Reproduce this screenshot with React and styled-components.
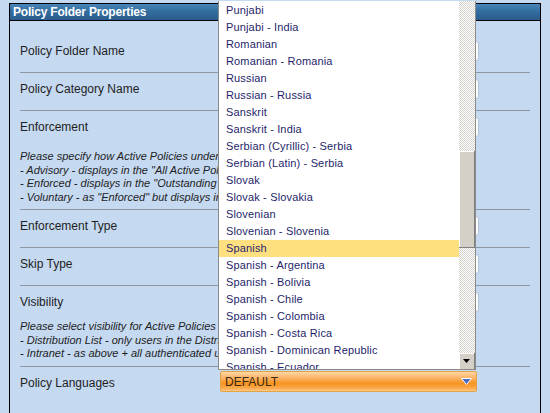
import React from "react";
import styled, { createGlobalStyle } from "styled-components";

const GlobalStyle = createGlobalStyle`
  html, body {
    margin: 0;
    padding: 0;
    background: #c5d9f1;
    overflow: hidden;
  }
  body {
    font-family: "Liberation Sans", Arial, sans-serif;
    font-size: 12px;
    color: #1b1b1b;
  }
`;

const Page = styled.div`
  width: 550px;
  height: 413px;
  padding: 3px 0 0 9px;
  box-sizing: border-box;
`;

const Panel = styled.section`
  width: 532px;
  height: 420px;
  box-sizing: border-box;
  border: 1px solid #000;
  border-bottom: none;
`;

const TitleBar = styled.header`
  height: 16px;
  padding-left: 3px;
  display: flex;
  align-items: center;
  background: linear-gradient(#4a86bb 0%, #336d9f 45%, #285c8c 100%);
  border-bottom: 1px solid #000;
  color: #fff;
  font-weight: bold;
  font-size: 12px;
  letter-spacing: -0.2px;
`;

const Form = styled.div`
  padding: 14px 10px 0 10px;
  display: flex;
  flex-direction: column;
`;

const Row = styled.div`
  display: flex;
  flex-direction: column;
  padding: 6px 0 5px 0;
  border-bottom: ${(p) => (p.last ? "none" : "1px solid #8e979f")};
`;

const Field = styled.div`
  display: grid;
  grid-template-columns: 200px 259px;
  align-items: center;
  height: 20px;
  margin-bottom: 6px;
  position: relative;
`;

const Label = styled.span`
  font-size: 12px;
  color: #1e1e1e;
`;

const Input = styled.div`
  height: 20px;
  box-sizing: border-box;
  background: #fff;
  border: 1px solid #b3c2d6;
  border-radius: 3px;
`;

const Help = styled.div`
  margin-top: ${(p) => p.gap}px;
  font-style: italic;
  font-size: 11px;
  line-height: 13.5px;
  color: #1e1e1e;
  white-space: nowrap;
`;

const Select = styled.div`
  width: 257px;
  height: 21px;
  margin-top: -2px;
  box-sizing: border-box;
  border: 1px solid #e3a447;
  border-radius: 2px;
  background: linear-gradient(#ffd7a4 0%, #fbb46a 30%, #f7931f 60%, #fba94c 85%, #ffc987 100%);
  display: flex;
  align-items: center;
  justify-content: space-between;
  padding: 0 4px 0 4px;
  font-size: 12px;
  color: #3a2a10;
  position: relative;
`;

const Dropdown = styled.div`
  position: absolute;
  left: -3px;
  bottom: calc(100% + 2px);
  width: 258px;
  height: 369px;
  box-sizing: border-box;
  background: #fff;
  border: 1px solid #8a8a8a;
  border-top: none;
  display: flex;
  overflow: hidden;
  z-index: 10;
`;

const List = styled.ul`
  list-style: none;
  margin: 0;
  padding: 1px 0 0 0;
  flex: 1;
  overflow: hidden;
`;

const Item = styled.li`
  height: 17px;
  line-height: 17px;
  padding-left: 7px;
  font-size: 11px;
  letter-spacing: 0.15px;
  color: #1f1f6b;
  white-space: nowrap;
  background: ${(p) => (p.selected ? "#ffe081" : "transparent")};
`;

const ScrollTrack = styled.div`
  width: 16px;
  display: flex;
  flex-direction: column;
  background: repeating-conic-gradient(#ffffff 0 25%, #d6d3cc 0 50%) 0 0 / 2px 2px;
`;

const Thumb = styled.div`
  margin-top: ${(p) => p.offset}px;
  height: ${(p) => p.size}px;
  background: #d4d0c8;
  border-right: 1px solid #808080;
  border-bottom: 1px solid #808080;
  box-shadow: inset 1px 1px 0 #fff;
`;

const ArrowButton = styled.div`
  margin-top: auto;
  height: 16px;
  background: #d4d0c8;
  border-right: 1px solid #808080;
  box-shadow: inset 1px 1px 0 #fff;
  display: flex;
  align-items: center;
  justify-content: center;
`;

const languages = [
  "Punjabi",
  "Punjabi - India",
  "Romanian",
  "Romanian - Romania",
  "Russian",
  "Russian - Russia",
  "Sanskrit",
  "Sanskrit - India",
  "Serbian (Cyrillic) - Serbia",
  "Serbian (Latin) - Serbia",
  "Slovak",
  "Slovak - Slovakia",
  "Slovenian",
  "Slovenian - Slovenia",
  "Spanish",
  "Spanish - Argentina",
  "Spanish - Bolivia",
  "Spanish - Chile",
  "Spanish - Colombia",
  "Spanish - Costa Rica",
  "Spanish - Dominican Republic",
  "Spanish - Ecuador",
];

function LanguageSelect() {
  return (
    <Select>
      <span>DEFAULT</span>
      <svg width="11" height="7" viewBox="0 0 11 7">
        <path d="M0.5 0.5 H10.5 L5.5 6.5 Z" fill="#4a66c4" stroke="#fff" strokeWidth="1" />
      </svg>
      <Dropdown>
        <List>
          {languages.map((l) => (
            <Item key={l} selected={l === "Spanish"}>
              {l}
            </Item>
          ))}
        </List>
        <ScrollTrack>
          <Thumb offset={150} size={96} />
          <ArrowButton>
            <svg width="7" height="4" viewBox="0 0 7 4">
              <path d="M0 0 H7 L3.5 4 Z" fill="#000" />
            </svg>
          </ArrowButton>
        </ScrollTrack>
      </Dropdown>
    </Select>
  );
}

export default function App() {
  return (
    <Page>
      <GlobalStyle />
      <Panel>
        <TitleBar>Policy Folder Properties</TitleBar>
        <Form>
          <Row>
            <Field>
              <Label>Policy Folder Name</Label>
              <Input />
            </Field>
          </Row>
          <Row>
            <Field>
              <Label>Policy Category Name</Label>
              <Input />
            </Field>
          </Row>
          <Row>
            <Field>
              <Label>Enforcement</Label>
              <Input />
            </Field>
            <Help gap={7}>
              <div>Please specify how Active Policies under this folder are presented:</div>
              <div>- Advisory - displays in the "All Active Policies" list only</div>
              <div>- Enforced - displays in the "Outstanding Policies" list</div>
              <div>- Voluntary - as "Enforced" but displays in a separate list</div>
            </Help>
          </Row>
          <Row>
            <Field>
              <Label>Enforcement Type</Label>
              <Input />
            </Field>
          </Row>
          <Row>
            <Field>
              <Label>Skip Type</Label>
              <Input />
            </Field>
          </Row>
          <Row>
            <Field>
              <Label>Visibility</Label>
              <Input />
            </Field>
            <Help gap={2}>
              <div>Please select visibility for Active Policies in this folder:</div>
              <div>- Distribution List - only users in the Distribution List</div>
              <div>- Intranet - as above + all authenticated users</div>
            </Help>
          </Row>
          <Row last>
            <Field>
              <Label>Policy Languages</Label>
              <LanguageSelect />
            </Field>
          </Row>
        </Form>
      </Panel>
    </Page>
  );
}
